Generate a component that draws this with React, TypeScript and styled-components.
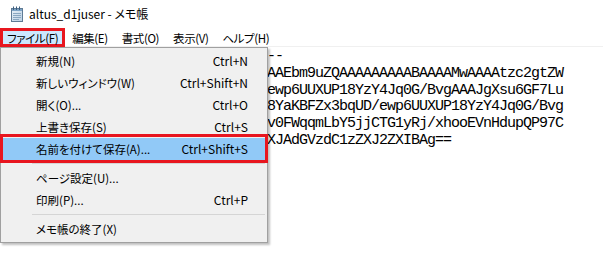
import React from "react";
import styled, { createGlobalStyle } from "styled-components";

const Global = createGlobalStyle`
  html, body { margin: 0; padding: 0; background: #ffffff; }
  body { font-family: "Noto Sans CJK JP", "Noto Sans", sans-serif; }
`;

const Window = styled.div`
  position: relative;
  width: 603px;
  height: 279px;
  overflow: hidden;
  background: #ffffff;
  display: flex;
  flex-direction: column;
  font-family: "Noto Sans CJK JP", "Noto Sans", sans-serif;
  font-feature-settings: "palt";
  font-size: 12px;
  color: #000;
`;

const TitleBar = styled.div`
  height: 28px;
  display: flex;
  align-items: center;
  gap: 4px;
  padding: 0 0 1px 9px;
  box-sizing: border-box;
`;

const TitleText = styled.span`
  font-size: 12px;
  line-height: 16px;
`;

const MenuBar = styled.div`
  height: 19px;
  display: flex;
  align-items: stretch;
  box-shadow: inset 0 -1px 0 #f0f0f0;
  font-size: 11.5px;
  letter-spacing: -0.4px;
`;

const MenuBarItem = styled.div<{ $active?: boolean }>`
  padding: 0 7px;
  display: flex;
  align-items: center;
  line-height: 16px;
  background: ${(p) => (p.$active ? "#cce8ff" : "transparent")};
  box-shadow: ${(p) => (p.$active ? "inset 0 0 0 3px #e8161f" : "none")};
`;

const Editor = styled.pre`
  flex: 1;
  margin: 0;
  padding: 2px 0 0 3px;
  font-family: "Liberation Mono", "DejaVu Sans Mono", monospace;
  font-size: 15px;
  letter-spacing: -1px;
  line-height: 16.75px;
  color: #000;
  white-space: pre;
`;

const Hidden = styled.span`
  visibility: hidden;
`;

const Dropdown = styled.div`
  position: absolute;
  top: 47px;
  left: 0;
  width: 268px;
  box-sizing: border-box;
  background: #f0f0f0;
  border: 1px solid #a0a0a0;
  padding: 2px;
  box-shadow: 2px 2px 2px rgba(0, 0, 0, 0.25);
  display: flex;
  flex-direction: column;
  font-size: 11.5px;
`;

const Item = styled.div<{ $hl?: boolean }>`
  position: relative;
  height: 22px;
  display: flex;
  align-items: center;
  justify-content: space-between;
  padding: 0 17px 0 33px;
  line-height: 16px;
  background: ${(p) => (p.$hl ? "#91c9f7" : "transparent")};
  &::after {
    content: "";
    display: ${(p) => (p.$hl ? "block" : "none")};
    position: absolute;
    top: -4px;
    bottom: -3px;
    left: -3px;
    right: -3px;
    border: 3px solid #e8161f;
  }
`;

const Shortcut = styled.span`
  white-space: nowrap;
  font-size: 12px;
`;

const Separator = styled.div`
  height: 7px;
  display: flex;
  align-items: center;
  padding-left: 29px;
  &::before {
    content: "";
    flex: 1;
    height: 1px;
    background: #d5d5d5;
  }
`;

const NotepadIcon = () => (
  <svg width="16" height="16" viewBox="0 0 16 16">
    <defs>
      <linearGradient id="pg" x1="0" y1="0" x2="1" y2="1">
        <stop offset="0" stopColor="#e9f1f8" />
        <stop offset="1" stopColor="#b9cfe2" />
      </linearGradient>
    </defs>
    <rect x="2.5" y="2.5" width="11" height="13" fill="url(#pg)" stroke="#5f7b95" />
    <rect x="3" y="3" width="10" height="2" fill="#7ea4c6" />
    <g stroke="#3d5f80" strokeWidth="1">
      <line x1="4.5" y1="0.5" x2="4.5" y2="4" />
      <line x1="7.5" y1="0.5" x2="7.5" y2="4" />
      <line x1="10.5" y1="0.5" x2="10.5" y2="4" />
    </g>
    <g stroke="#8aa7c1" strokeWidth="1">
      <line x1="4" y1="7.5" x2="12" y2="7.5" />
      <line x1="4" y1="9.5" x2="12" y2="9.5" />
      <line x1="4" y1="11.5" x2="12" y2="11.5" />
      <line x1="4" y1="13.5" x2="10" y2="13.5" />
    </g>
  </svg>
);

const lines = [
  "-----BEGIN OPENSSH PRIVATE KEY-----",
  "b3BlbnNzaC1rZXktdjEAAAAABG5vbmUAAAAEbm9uZQAAAAAAAAABAAAAMwAAAAtzc2gtZW",
  "QyNTUxOQAAACBxk3Z1yRpG7mLq9Vd0c2Hewp6UUXUP18YzY4Jq0G/BvgAAAJgXsu6GF7Lu",
  "hgAAAAtzc2gtZWQyNTUxOQAAACBxk3Z1y8YaKBFZx3bqUD/ewp6UUXUP18YzY4Jq0G/Bvg",
  "AAAEC3kq0n7XpQe2aL1mZfH8sRtYc4uW9v0FWqqmLbY5jjCTG1yRj/xhooEVnHdupQP97C",
  "l8mN2pQrT4sVwXyZ0aB3cD6eFgHiKjL0MXJAdGVzdC1zZXJ2ZXIBAg==",
];

const CUT = 33;

type MenuEntry = { label: string; shortcut?: string; hl?: boolean } | "sep";

const entries: MenuEntry[] = [
  { label: "新規(N)", shortcut: "Ctrl+N" },
  { label: "新しいウィンドウ(W)", shortcut: "Ctrl+Shift+N" },
  { label: "開く(O)...", shortcut: "Ctrl+O" },
  { label: "上書き保存(S)", shortcut: "Ctrl+S" },
  { label: "名前を付けて保存(A)...", shortcut: "Ctrl+Shift+S", hl: true },
  "sep",
  { label: "ページ設定(U)..." },
  { label: "印刷(P)...", shortcut: "Ctrl+P" },
  "sep",
  { label: "メモ帳の終了(X)" },
];

export default function App() {
  return (
    <Window>
      <Global />
      <TitleBar>
        <NotepadIcon />
        <TitleText>altus_d1juser - メモ帳</TitleText>
      </TitleBar>
      <MenuBar>
        <MenuBarItem $active>ファイル(F)</MenuBarItem>
        <MenuBarItem>編集(E)</MenuBarItem>
        <MenuBarItem>書式(O)</MenuBarItem>
        <MenuBarItem>表示(V)</MenuBarItem>
        <MenuBarItem>ヘルプ(H)</MenuBarItem>
      </MenuBar>
      <Editor>
        {lines.map((l, i) => (
          <React.Fragment key={i}>
            <Hidden>{l.slice(0, CUT)}</Hidden>
            {l.slice(CUT)}
            {i < lines.length - 1 ? "\n" : ""}
          </React.Fragment>
        ))}
      </Editor>
      <Dropdown>
        {entries.map((e, i) =>
          e === "sep" ? (
            <Separator key={i} />
          ) : (
            <Item key={i} $hl={e.hl}>
              <span>{e.label}</span>
              {e.shortcut && <Shortcut>{e.shortcut}</Shortcut>}
            </Item>
          )
        )}
      </Dropdown>
    </Window>
  );
}
